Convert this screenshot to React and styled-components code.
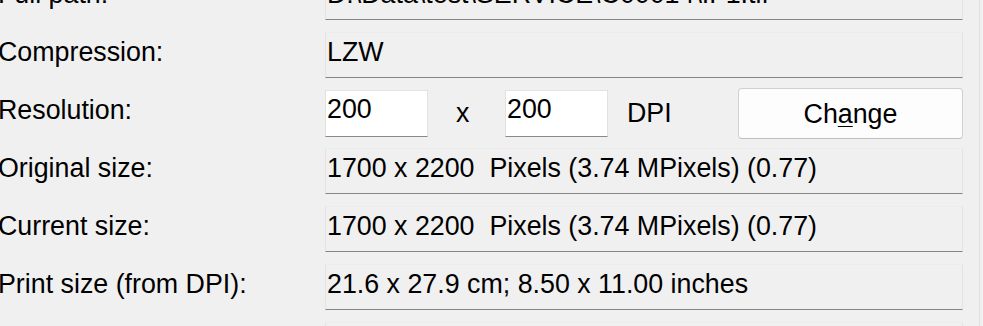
import React from "react";
import styled, { createGlobalStyle } from "styled-components";

const Global = createGlobalStyle`
  html, body {
    margin: 0;
    padding: 0;
    background: #f0f0f0;
    overflow: hidden;
  }
  body {
    font-family: "Liberation Sans", Arial, sans-serif;
    font-size: 26.8px;
    color: #000;
  }
`;

const Page = styled.div`
  display: flex;
  width: 983px;
  height: 326px;
  overflow: hidden;
`;

const Sheet = styled.div`
  flex: 1;
  display: grid;
  grid-template-columns: 327px 638px;
  grid-auto-rows: 46px;
  row-gap: 12px;
  align-content: start;
  margin: -26px 0 0 -2px;
`;

const Divider = styled.div`
  width: 1px;
  background: #dfdfdf;
`;

const Edge = styled.div`
  width: 3px;
`;

const Label = styled.div`
  padding-top: 5px;
  line-height: 30px;
  white-space: nowrap;
`;

const Field = styled.div`
  box-sizing: border-box;
  height: 46px;
  border: 1px solid #e4e4e4;
  border-top-color: #ececec;
  border-bottom-color: #858585;
  background: #f0f0f0;
  padding: 4px 0 0 1px;
  line-height: 30px;
  white-space: pre;
  overflow: hidden;
`;

const ResRow = styled.div`
  display: flex;
  align-items: flex-start;
  height: 47px;
`;

const Input = styled.div`
  box-sizing: border-box;
  flex: none;
  width: 103px;
  height: 47px;
  background: #fff;
  border: 1px solid #e2e2e2;
  border-bottom-color: #8a8a8a;
  padding: 3px 0 0 1px;
  line-height: 30px;
`;

const Static = styled.span`
  flex: none;
  padding-top: 8px;
  line-height: 30px;
  margin-left: ${(p) => p.$ml}px;
  width: ${(p) => p.$w}px;
`;

const Button = styled.div`
  box-sizing: border-box;
  flex: none;
  margin-top: -2px;
  margin-left: auto;
  width: 225px;
  height: 51px;
  background: #fdfdfd;
  border: 1px solid #d0d0d0;
  border-bottom-color: #bdbdbd;
  border-radius: 4px;
  display: flex;
  align-items: center;
  justify-content: center;
  line-height: 30px;
  padding-top: 1px;
`;

const Key = styled.span`
  text-decoration: underline;
  text-underline-offset: 3px;
  text-decoration-thickness: 1px;
`;

const rows = [
  ["Full path:", "D:\\Data\\test\\SERVICE\\C00014\\IF1.tif"],
  ["Compression:", "LZW"],
  null,
  ["Original size:", "1700 x 2200  Pixels (3.74 MPixels) (0.77)"],
  ["Current size:", "1700 x 2200  Pixels (3.74 MPixels) (0.77)"],
  ["Print size (from DPI):", "21.6 x 27.9 cm; 8.50 x 11.00 inches"],
  ["Colors:", ""],
];

export default function App() {
  return (
    <>
      <Global />
      <Page>
        <Sheet>
          {rows.map((r, i) =>
            r ? (
              <React.Fragment key={i}>
                <Label>{r[0]}</Label>
                <Field>{r[1]}</Field>
              </React.Fragment>
            ) : (
              <React.Fragment key={i}>
                <Label>Resolution:</Label>
                <ResRow>
                  <Input>200</Input>
                  <Static $ml={28} $w={49}>x</Static>
                  <Input>200</Input>
                  <Static $ml={19} $w={60}>DPI</Static>
                  <Button>
                    <span>
                      Ch<Key>a</Key>nge
                    </span>
                  </Button>
                </ResRow>
              </React.Fragment>
            )
          )}
        </Sheet>
        <Divider />
        <Edge />
      </Page>
    </>
  );
}
